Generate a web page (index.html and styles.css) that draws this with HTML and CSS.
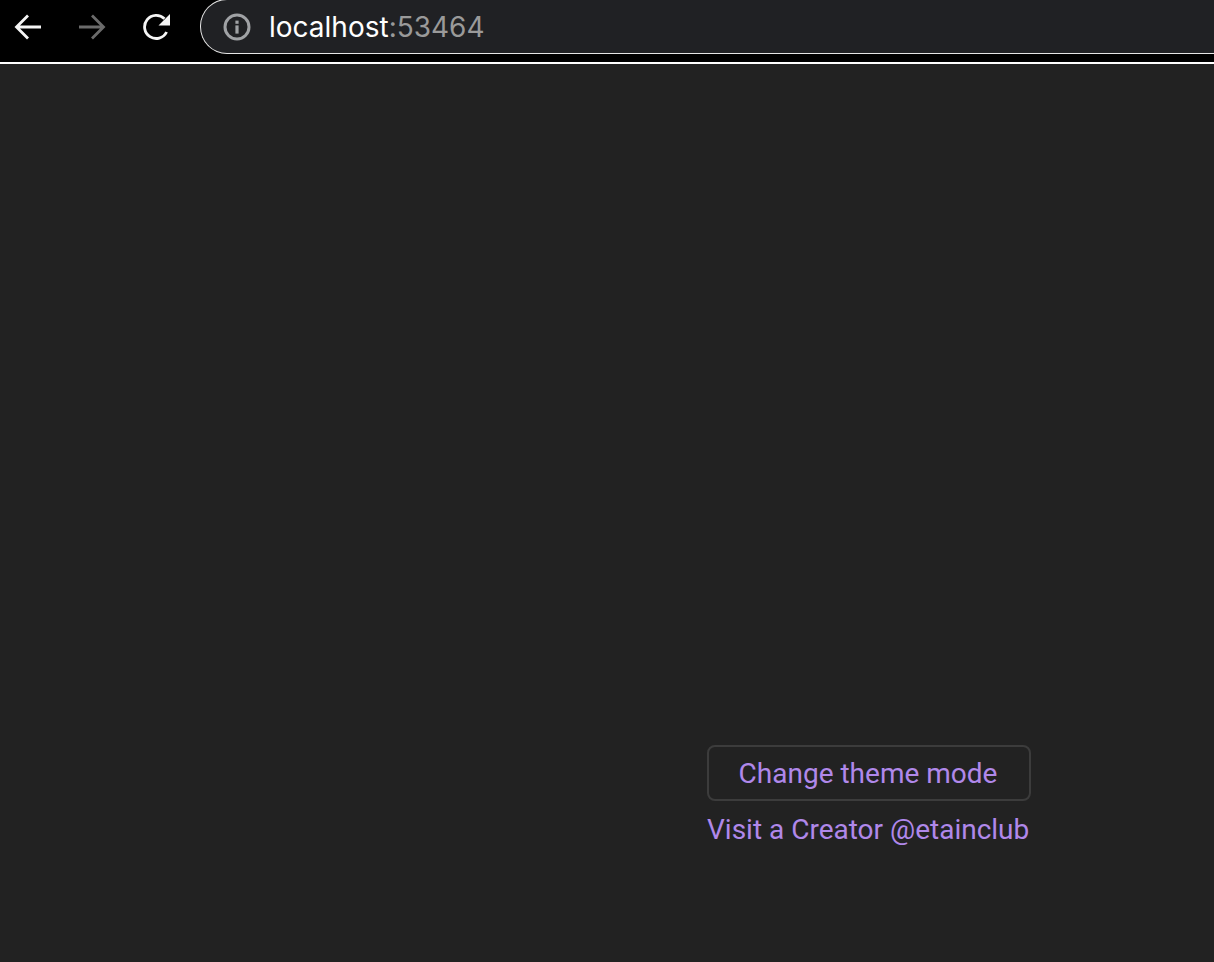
FILE: index.html
```html
<!DOCTYPE html>
<html lang="en">
<head>
<meta charset="utf-8">
<title>localhost:53464</title>
<link rel="stylesheet" href="styles.css">
</head>
<body>
<header class="toolbar">
  <nav class="nav">
    <svg class="nav-icon" viewBox="0 0 28 28" fill="none" stroke="#f5f5f5" stroke-width="2.8"><path d="M27 14H3M14 2.5L2.5 14 14 25.5"/></svg>
    <svg class="nav-icon" viewBox="0 0 28 28" fill="none" stroke="#6b6b6b" stroke-width="2.8"><path d="M1 14H25M14 2.5L25.5 14 14 25.5"/></svg>
    <svg class="nav-icon nav-reload" viewBox="0 0 28 28"><path d="M23.6 19A11.6 11.6 0 1 1 21.5 5.8" fill="none" stroke="#f5f5f5" stroke-width="2.8"/><path d="M27 1V12.5H15.5Z" fill="#f5f5f5"/></svg>
  </nav>
  <div class="omnibox">
    <svg class="info" viewBox="0 0 28 28"><circle cx="14" cy="14" r="12" fill="none" stroke="#a0a2a5" stroke-width="3"/><rect x="12.4" y="12.4" width="3.2" height="8.2" fill="#a0a2a5"/><rect x="12.4" y="7.6" width="3.2" height="3.2" fill="#a0a2a5"/></svg>
    <span class="host">localhost<span class="port">:53464</span></span>
  </div>
</header>
<main class="page">
  <div class="actions">
    <button class="theme-btn" type="button">Change theme mode</button>
    <a class="creator" href="#">Visit a Creator @etainclub</a>
  </div>
</main>
</body>
</html>
```
FILE: styles.css
```css
html, body {
  margin: 0;
  height: 100%;
}
body {
  display: flex;
  flex-direction: column;
  background: #222222;
  font-family: Roboto, "Liberation Sans", sans-serif;
  overflow: hidden;
}
.toolbar {
  flex: none;
  height: 62px;
  display: flex;
  align-items: flex-start;
  background: #000000;
  border-bottom: 2px solid #ffffff;
}
.nav {
  flex: none;
  width: 200px;
  height: 53px;
  display: flex;
  align-items: center;
  gap: 36px;
  padding-left: 14px;
  box-sizing: border-box;
}
.nav-icon {
  flex: none;
  width: 28px;
  height: 28px;
}
.nav-reload {
  margin-left: 1px;
}
.omnibox {
  flex: 1;
  height: 55px;
  box-sizing: border-box;
  margin-top: -1px;
  display: flex;
  align-items: center;
  gap: 18px;
  padding: 0 0 0 22px;
  background: #202124;
  border: 1px solid #e6e6e6;
  border-right: 0;
  border-radius: 27px 0 0 27px;
}
.info {
  flex: none;
  width: 28px;
  height: 28px;
}
.host {
  font-family: Inter, Roboto, sans-serif;
  font-size: 28px;
  color: #ffffff;
}
.port {
  color: #9a9a9a;
}
.page {
  flex: 1;
  padding: 681px 0 0 707px;
}
.actions {
  width: 324px;
  display: flex;
  flex-direction: column;
  align-items: flex-start;
  gap: 12px;
}
.theme-btn {
  width: 100%;
  height: 56px;
  box-sizing: border-box;
  padding: 0 8px 0 6px;
  background: transparent;
  border: 2px solid #3c3c3c;
  border-radius: 8px;
  color: #b088ea;
  font: inherit;
  font-size: 28px;
}
.creator {
  color: #b088ea;
  font-size: 28px;
  text-decoration: none;
}
```
